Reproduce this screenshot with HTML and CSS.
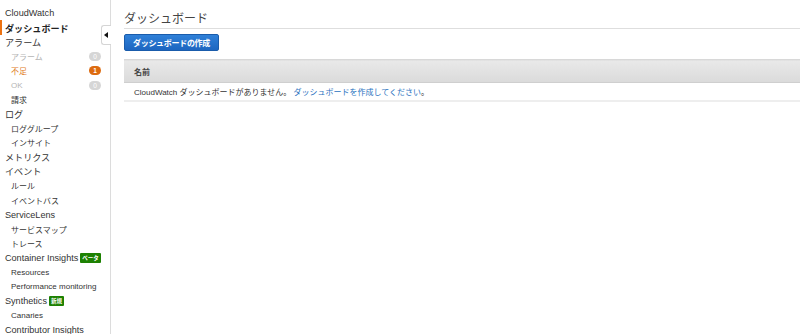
FILE: index.html
```html
<!DOCTYPE html>
<html lang="ja">
<head>
    <meta charset="UTF-8">
    <meta name="viewport" content="width=device-width, initial-scale=1.0">
    <title>CloudWatch ダッシュボード</title>
    <link rel="stylesheet" href="styles.css">
</head>
<body>
    <div class="layout">
        <nav class="sidebar">
            <a class="item top">CloudWatch</a>
            <a class="item top active">ダッシュボード</a>
            <a class="item top">アラーム</a>
            <a class="item sub disabled">アラーム <span class="count grey">0</span></a>
            <a class="item sub warn">不足 <span class="count orange">1</span></a>
            <a class="item sub disabled">OK <span class="count grey">0</span></a>
            <a class="item sub">請求</a>
            <a class="item top">ログ</a>
            <a class="item sub">ロググループ</a>
            <a class="item sub">インサイト</a>
            <a class="item top">メトリクス</a>
            <a class="item top">イベント</a>
            <a class="item sub">ルール</a>
            <a class="item sub">イベントバス</a>
            <a class="item top">ServiceLens</a>
            <a class="item sub">サービスマップ</a>
            <a class="item sub">トレース</a>
            <a class="item top">Container Insights<span class="tag">ベータ</span></a>
            <a class="item sub">Resources</a>
            <a class="item sub">Performance monitoring</a>
            <a class="item top">Synthetics<span class="tag">新規</span></a>
            <a class="item sub">Canaries</a>
            <a class="item top">Contributor Insights</a>

            <div class="collapse">
                <svg width="4" height="6" viewBox="0 0 4 6"><polygon points="4,0 4,6 0,3" fill="#111"/></svg>
            </div>
        </nav>

        <main class="main">
            <h1 class="title">ダッシュボード</h1>
            <button type="button" class="btn-primary">ダッシュボードの作成</button>

            <table class="list">
                <thead>
                    <tr><th>名前</th></tr>
                </thead>
                <tbody>
                    <tr>
                        <td>CloudWatch ダッシュボードがありません。 <a href="#">ダッシュボードを作成してください</a>。</td>
                    </tr>
                </tbody>
            </table>
        </main>
    </div>
</body>
</html>
```

FILE: styles.css
```css
body {
    margin: 0;
    font-family: "Liberation Sans", "Noto Sans CJK JP", sans-serif;
    color: #333;
    background-color: white;
    overflow: hidden;
}

.layout {
    display: flex;
    height: 334px;
}

.sidebar {
    position: relative;
    width: 110px;
    flex-shrink: 0;
    border-right: 1px solid #dcdcdc;
    padding-top: 6px;
    box-sizing: content-box;
}

.item {
    display: flex;
    align-items: center;
    height: 14.4px;
    white-space: nowrap;
    color: #333;
    text-decoration: none;
}

.item.top {
    padding-left: 5px;
    font-size: 9.1px;
}

.item.sub {
    padding-left: 11px;
    font-size: 8px;
}

.item.active {
    font-weight: bold;
    box-shadow: inset 2px 0 0 #ec7211;
    color: #222;
}

.item.disabled {
    color: #b5b5b5;
}

.item.warn {
    color: #e07b1a;
}

.count {
    margin-left: auto;
    margin-right: 9px;
    width: 12px;
    height: 9px;
    border-radius: 5px;
    color: white;
    font-size: 6.5px;
    line-height: 9px;
    text-align: center;
}

.count.grey {
    background-color: #d6d6d6;
}

.count.orange {
    background-color: #dd6b10;
    font-weight: bold;
}

.tag {
    margin-left: 2px;
    padding: 0 2px;
    height: 10px;
    line-height: 10px;
    font-size: 5.5px;
    font-weight: bold;
    color: white;
    background-color: #1d8102;
    border-radius: 1px;
}

.collapse {
    position: absolute;
    top: 25px;
    right: -1px;
    width: 10px;
    height: 20px;
    background-color: white;
    border: 1px solid #d5d5d5;
    border-right: none;
    border-radius: 3px 0 0 3px;
    display: flex;
    align-items: center;
    padding-left: 2px;
    box-sizing: border-box;
}

.main {
    flex: 1;
    padding-left: 13px;
}

.title {
    margin: 0;
    padding-top: 12px;
    padding-bottom: 1px;
    font-size: 12px;
    line-height: 15px;
    font-weight: normal;
    color: #444;
    border-bottom: 1px solid #dedede;
}

.btn-primary {
    display: block;
    margin-top: 5px;
    height: 17px;
    padding: 0 8px;
    font-family: inherit;
    font-size: 8px;
    font-weight: bold;
    letter-spacing: -0.3px;
    color: white;
    background: linear-gradient(#2f80d8, #1d66c0);
    border: 1px solid #1a5cab;
    border-radius: 2px;
    cursor: pointer;
}

.list {
    width: 100%;
    margin-top: 8px;
    border-collapse: collapse;
    font-size: 8px;
}

.list th {
    height: 22px;
    padding: 0 10px;
    text-align: left;
    font-weight: bold;
    color: #444;
    background: linear-gradient(#e9e9e9, #dadada);
    border-top: 1px solid #d8d8d8;
    border-bottom: 1px solid #cfcfcf;
}

.list td {
    height: 17px;
    padding: 0 10px;
    color: #333;
    border-bottom: 2px solid #eeeeee;
}

.list a {
    color: #2a72c0;
    text-decoration: none;
}
```
